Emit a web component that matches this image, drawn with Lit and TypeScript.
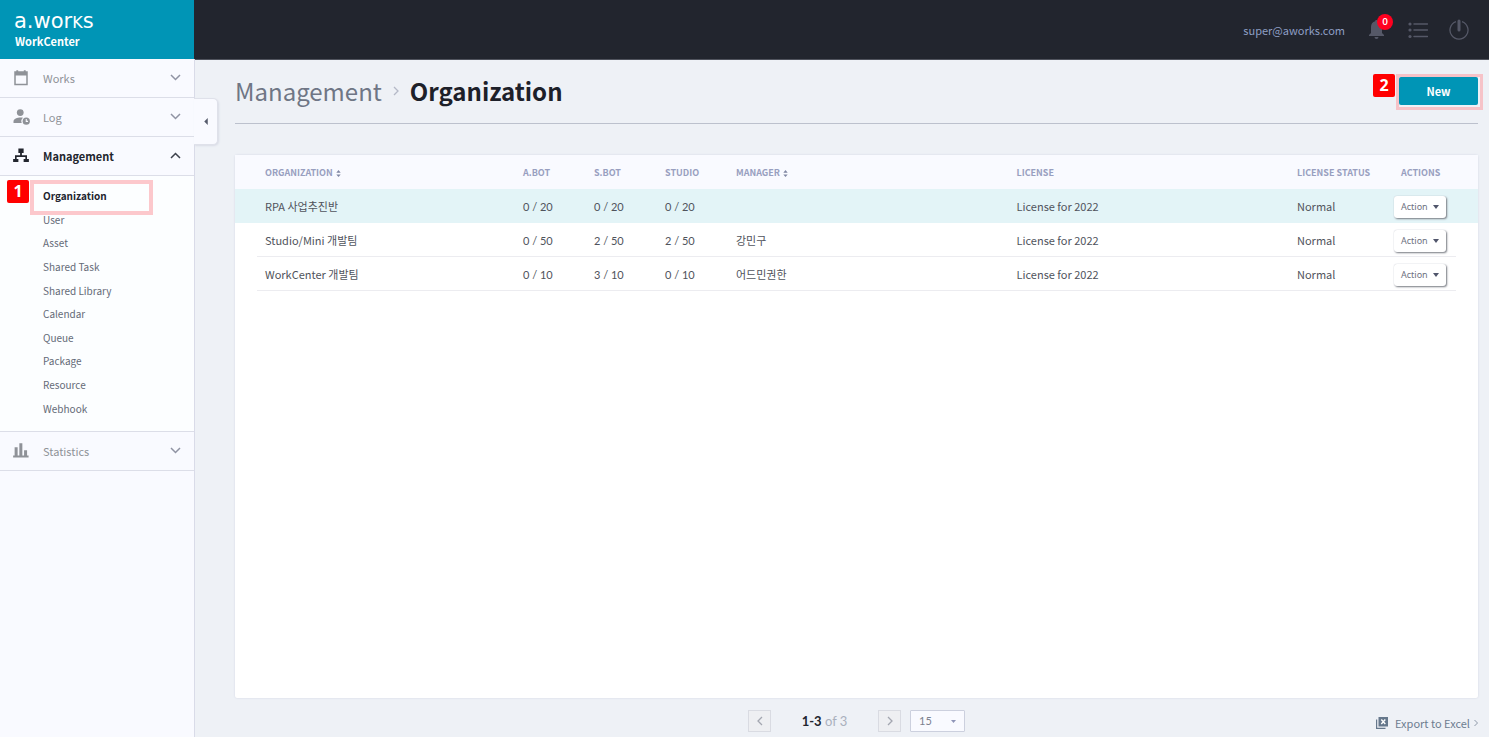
import { LitElement, html, css, svg, nothing } from "lit";
import { customElement } from "lit/decorators.js";
import { classMap } from "lit/directives/class-map.js";

const icons = {
  works: svg`<path d="M4 6h16v14.500H4zM4 4h16v3.500H4z" fill="none" stroke="currentColor" stroke-width="2"/><path d="M7 1.500v3M17 1.500v3" stroke="currentColor" stroke-width="2.500"/>`,
  log: svg`<circle cx="11" cy="6" r="4.500" fill="currentColor"/><path d="M2 20v-2.500c0-3 5-5 9.500-5 1.200 0 2.200.1 3.200.4A6 6 0 0 0 13 20z" fill="currentColor"/><circle cx="19" cy="17.500" r="4.800" fill="currentColor"/><path d="M19 14.800v3h2.400" fill="none" stroke="#f9faff" stroke-width="1.400"/>`,
  management: svg`<path d="M8.500 2h7v6h-2.300v3H20v5h2.500v4h-7v-4h2.300v-2.800H6.200V16h2.300v4h-7v-4H4v-5h6.800V8H8.500z" fill="currentColor"/>`,
  statistics: svg`<path d="M3.500 7h4v11h2.300V1.500h4V18h2.300v-7h4v7h2v2.500H1.500V18h2z" fill="currentColor"/>`,
};

interface Section {
  label: string;
  icon: keyof typeof icons;
  items?: string[];
}

const sections: Section[] = [
  { label: "Works", icon: "works" },
  { label: "Log", icon: "log" },
  {
    label: "Management",
    icon: "management",
    items: ["Organization", "User", "Asset", "Shared Task", "Shared Library", "Calendar", "Queue", "Package", "Resource", "Webhook"],
  },
  { label: "Statistics", icon: "statistics" },
];

const rows = [
  { name: "RPA 사업추진반", a: "0 / 20", s: "0 / 20", st: "0 / 20", manager: "" },
  { name: "Studio/Mini 개발팀", a: "0 / 50", s: "2 / 50", st: "2 / 50", manager: "강민구" },
  { name: "WorkCenter 개발팀", a: "0 / 10", s: "3 / 10", st: "0 / 10", manager: "어드민권한" },
];

const base = css`
  * { box-sizing: border-box; }
  button, select { font: inherit; color: inherit; margin: 0; cursor: pointer; }
  a { color: inherit; text-decoration: none; }
  svg { display: block; flex: none; }
  .badge {
    position: absolute;
    display: grid;
    place-items: center;
    width: 22px;
    height: 23px;
    border-radius: 2px;
    background: #f00;
    color: #fff;
    font: 700 16px/23px "Noto Sans", sans-serif;
  }
`;

@customElement("side-nav")
class SideNav extends LitElement {
  static styles = [base, css`
    :host {
      display: flex;
      flex-direction: column;
      position: relative;
      width: 195px;
      flex: none;
      background: #f9faff;
      border-right: 1px solid #d9dbe8;
    }
    .brand {
      height: 59px;
      margin-right: -1px;
      padding: 11px 14px 0;
      background: #0095b6;
      border-right: 1px solid #22252e;
      color: #fff;
    }
    .logo { font: 21px/20px "DejaVu Sans", sans-serif; }
    .cap { font-size: 16px; text-transform: uppercase; }
    .product { font-size: 11px; line-height: 16px; font-weight: 700; padding-left: 1px; }
    .head {
      display: flex;
      align-items: center;
      width: 100%;
      height: 39px;
      padding: 0 13px 0 12px;
      border: 0;
      border-bottom: 1px solid #dcdee8;
      background: none;
      color: #8f9298;
      font-size: 11px;
      text-align: left;
    }
    .head.open { color: #22252e; font-weight: 700; }
    .label { flex: 1; padding-left: 13px; }
    .chev { color: #9093a3; }
    .open .chev { color: #3d414c; }
    .items {
      list-style: none;
      margin: 0;
      padding: 8px 0 11px;
      display: grid;
      grid-auto-rows: 1fr;
      height: 256px;
      background: #fcfeff;
      border-bottom: 1px solid #dcdee8;
      font-size: 10px;
      color: #646a77;
    }
    .item { position: relative; display: flex; align-items: center; padding-left: 43px; }
    .current { color: #22252e; font-weight: 700; }
    .frame {
      position: absolute;
      left: 30px;
      top: -4px;
      width: 123px;
      height: 35px;
      border: 4px solid #fcc8cc;
      pointer-events: none;
    }
    .badge { left: 7px; top: -4px; }
    .handle {
      position: absolute;
      left: 194px;
      top: 98px;
      width: 24px;
      height: 47px;
      display: grid;
      place-items: center;
      padding: 0;
      border: 1px solid #dfe1ea;
      border-left: 0;
      border-radius: 0 5px 5px 0;
      background: #f9faff;
      box-shadow: 1px 1px 2px #d9dce6;
      color: #555b6b;
    }
  `];

  render() {
    return html`
      <div class="brand">
        <div class="logo">a.wor<span class="cap">k</span>s</div>
        <div class="product">WorkCenter</div>
      </div>
      <nav>
        ${sections.map((s) => html`
          <button class=${classMap({ head: true, open: !!s.items })} aria-expanded=${!!s.items}>
            <svg width="18" height="18" viewBox="0 0 24 24">${icons[s.icon]}</svg>
            <span class="label">${s.label}</span>
            <svg class="chev" width="11" height="8" viewBox="0 0 11 8">
              <path d=${s.items ? "M1 6 5.500 1.500 10 6" : "M1 1 5.500 5.500 10 1"} fill="none" stroke="currentColor" stroke-width="1.500"/>
            </svg>
          </button>
          ${s.items ? html`<ul class="items">
            ${s.items.map((item, i) => html`
              <li class=${classMap({ item: true, current: i === 0 })}>
                <a href="#">${item}</a>
                ${i === 0 ? html`<span class="frame"></span><span class="badge">1</span>` : nothing}
              </li>`)}
          </ul>` : nothing}
        `)}
      </nav>
      <button class="handle" aria-label="Collapse menu">
        <svg width="4" height="7" viewBox="0 0 4 8"><path d="M4 0v8L0 4z" fill="currentColor"/></svg>
      </button>
    `;
  }
}

@customElement("top-bar")
class TopBar extends LitElement {
  static styles = [base, css`
    :host {
      display: flex;
      align-items: center;
      justify-content: flex-end;
      height: 60px;
      flex: none;
      padding-right: 20px;
      background: #22252e;
      border-bottom: 1px solid #50535d;
      color: #8e9fc4;
      font-size: 11px;
    }
    button {
      position: relative;
      padding: 0;
      border: 0;
      background: none;
      color: #555867;
    }
    .bell { margin-left: 23px; }
    .list { margin-left: 23px; }
    .power { margin-left: 21px; }
    .count {
      position: absolute;
      left: 9px;
      top: -6px;
      width: 16px;
      height: 16px;
      border-radius: 50%;
      background: #ff001f;
      color: #fff;
      font: 700 9px/16px Lato, sans-serif;
      text-align: center;
    }
  `];

  render() {
    return html`
      <span>super@aworks.com</span>
      <button class="bell" aria-label="Notifications">
        <svg width="17" height="20" viewBox="0 0 17 20">
          <path d="M8.500 0c.8 0 1.300.5 1.300 1.300C12.600 2 14 4.300 14 7v6l2 2v1H1v-1l2-2V7c0-2.700 1.400-5 4.200-5.700C7.200.5 7.700 0 8.500 0zM6.500 17h4a2 2 0 0 1-4 0z" fill="currentColor"/>
        </svg>
        <span class="count">0</span>
      </button>
      <button class="list" aria-label="List">
        <svg width="20" height="18" viewBox="0 0 20 18">
          <g fill="currentColor"><circle cx="2" cy="3" r="1.600"/><circle cx="2" cy="9" r="1.600"/><circle cx="2" cy="15.500" r="1.600"/></g>
          <path d="M6 3h13.500M6 9h13.500M6 15.500h13.500" stroke="currentColor" stroke-width="1.500" stroke-linecap="round"/>
        </svg>
      </button>
      <button class="power" aria-label="Log out">
        <svg width="20" height="22" viewBox="0 0 20 22">
          <path d="M7 2.600a9 9 0 1 0 6 0" fill="none" stroke="currentColor" stroke-width="1.300"/>
          <path d="M10 2v9" stroke="currentColor" stroke-width="3" stroke-linecap="round"/>
        </svg>
      </button>
    `;
  }
}

@customElement("organization-table")
class OrganizationTable extends LitElement {
  static styles = [base, css`
    :host {
      display: block;
      flex: 1;
      background: #fff;
      border-radius: 2px;
      box-shadow: 0 0 2px #cdd2df;
    }
    table { width: 100%; table-layout: fixed; border-collapse: collapse; font-size: 11px; color: #50535c; }
    .org { width: 288px; }
    .bot { width: 71px; }
    .status { width: 97px; }
    .actions { width: 84px; }
    th {
      height: 34px;
      padding: 0;
      background: #f9faff;
      color: #989fc0;
      font-size: 9px;
      font-weight: 700;
      text-align: left;
      white-space: nowrap;
    }
    th.org, td.name { padding-left: 30px; }
    th.actions { padding-left: 7px; }
    td { height: 34px; padding: 0; white-space: nowrap; }
    td.act { padding-top: 2px; }
    .num { font-family: Lato, sans-serif; }
    .row { background: linear-gradient(#ececf0, #ececf0) 22px bottom / calc(100% - 44px) 1px no-repeat; }
    .row.selected { background: #e3f4f7; }
    .sort { display: inline-block; margin-left: 1px; vertical-align: -1px; }
    .action {
      display: flex;
      align-items: center;
      gap: 5px;
      height: 22px;
      padding: 0 7px;
      border: 0;
      border-radius: 3px;
      background: #fff;
      box-shadow: 1px 1px 2px #777a82, 0 0 1px #c4c7cf;
      color: #6d7180;
      font: 9px/22px "Noto Sans", sans-serif;
    }
  `];

  private sort = html`<svg class="sort" width="5" height="7" viewBox="0 0 5 8"><path d="M0 3h5L2.500 0zM0 5h5L2.500 8z" fill="#8087a3"/></svg>`;

  render() {
    return html`
      <table>
        <thead><tr>
          <th class="org">ORGANIZATION ${this.sort}</th>
          <th class="bot">A.BOT</th>
          <th class="bot">S.BOT</th>
          <th class="bot">STUDIO</th>
          <th>MANAGER ${this.sort}</th>
          <th>LICENSE</th>
          <th class="status">LICENSE STATUS</th>
          <th class="actions">ACTIONS</th>
        </tr></thead>
        <tbody>
          ${rows.map((r, i) => html`<tr class=${classMap({ row: true, selected: i === 0 })}>
            <td class="name">${r.name}</td>
            <td class="num">${r.a}</td>
            <td class="num">${r.s}</td>
            <td class="num">${r.st}</td>
            <td>${r.manager}</td>
            <td>License for 2022</td>
            <td>Normal</td>
            <td class="act"><button class="action">Action
              <svg width="6" height="4" viewBox="0 0 6 4"><path d="M0 0h6L3 4z" fill="#50556b"/></svg>
            </button></td>
          </tr>`)}
        </tbody>
      </table>
    `;
  }
}

@customElement("app-root")
class AppRoot extends LitElement {
  static styles = [base, css`
    :host {
      display: flex;
      min-height: 100vh;
      background: #eef1f6;
      font-family: "Noto Sans CJK KR", sans-serif;
    }
    .page { flex: 1; min-width: 0; display: flex; flex-direction: column; }
    main { flex: 1; display: flex; flex-direction: column; padding: 0 11px 0 40px; }
    .title {
      display: flex;
      align-items: center;
      justify-content: space-between;
      height: 64px;
      padding-bottom: 1px;
      border-bottom: 1px solid #bcc1cd;
      margin-bottom: 31px;
    }
    h1 {
      display: flex;
      align-items: center;
      gap: 11px;
      margin: 0;
      font-size: 24px;
      line-height: 36px;
      color: #1d2029;
    }
    .parent { font-weight: 400; color: #6f7685; }
    .new { position: relative; }
    .create {
      display: block;
      width: 79px;
      height: 28px;
      padding: 0;
      border: 0;
      border-radius: 2px;
      background: #0095b6;
      color: #fff;
      font-size: 11px;
      font-weight: 700;
    }
    .frame {
      position: absolute;
      inset: -3px -5px -5px -3px;
      border: 3px solid #f6c3c8;
      pointer-events: none;
    }
    .badge { right: 83px; top: -3px; }
    footer {
      display: grid;
      grid-template-columns: 1fr auto 1fr;
      align-items: center;
      height: 39px;
      padding-top: 6px;
      font-size: 11px;
    }
    .pager { grid-column: 2; display: flex; align-items: center; height: 22px; }
    .step {
      display: grid;
      place-items: center;
      width: 23px;
      height: 22px;
      padding: 0;
      border: 1px solid #d9dbe2;
      background: #eeeff2;
      color: #a3a6b0;
    }
    .range { width: 107px; text-align: center; color: #aab0bd; font-family: Lato, sans-serif; font-size: 13px; }
    .range b { color: #22252e; }
    .size { position: relative; margin-left: 9px; color: #8f95b8; }
    select {
      appearance: none;
      display: block;
      width: 55px;
      height: 22px;
      padding: 0 8px;
      border: 1px solid #ccd0de;
      border-radius: 1px;
      background: #f9faff;
      color: #7c818f;
      font: 11px/20px Lato, sans-serif;
    }
    .caret { position: absolute; right: 9px; top: 10px; pointer-events: none; }
    .export {
      display: flex;
      align-items: center;
      justify-self: end;
      margin-top: 4px;
      color: #6d7d90;
      line-height: 20px;
    }
    .export-text { margin: 0 4px 0 7px; }
  `];

  render() {
    return html`
      <side-nav></side-nav>
      <div class="page">
        <top-bar></top-bar>
        <main>
          <div class="title">
            <h1>
              <span class="parent">Management</span>
              <svg width="6" height="10" viewBox="0 0 6 10"><path d="M1 1l4 4-4 4" fill="none" stroke="#b5b9c7" stroke-width="1.300"/></svg>
              <span>Organization</span>
            </h1>
            <div class="new">
              <button class="create">New</button>
              <span class="frame"></span>
              <span class="badge">2</span>
            </div>
          </div>
          <organization-table></organization-table>
          <footer>
            <div class="pager">
              <button class="step" aria-label="Previous page">
                <svg width="6" height="10" viewBox="0 0 6 10"><path d="M5 1L1 5l4 4" fill="none" stroke="currentColor" stroke-width="1.300"/></svg>
              </button>
              <span class="range"><b>1-3</b> of 3</span>
              <button class="step" aria-label="Next page">
                <svg width="6" height="10" viewBox="0 0 6 10"><path d="M1 1l4 4-4 4" fill="none" stroke="currentColor" stroke-width="1.300"/></svg>
              </button>
              <div class="size">
                <select aria-label="Rows per page"><option>15</option></select>
                <svg class="caret" width="5" height="3" viewBox="0 0 5 3"><path d="M0 0h5L2.500 3z" fill="currentColor"/></svg>
              </div>
            </div>
            <a class="export" href="#">
              <svg width="12" height="12" viewBox="0 0 12 12">
                <path d="M2.500 0h9.500v9.500H2.500zM0 2.500h1.200v8.300h8.300V12H0z" fill="#66788c"/>
                <path d="M5.300 2.500l4 4.500M9.300 2.500l-4 4.500" stroke="#fff" stroke-width="1.400"/>
              </svg>
              <span class="export-text">Export to Excel</span>
              <svg width="4" height="8" viewBox="0 0 4 8"><path d="M.5 1l3 3-3 3" fill="none" stroke="#8d98a8"/></svg>
            </a>
          </footer>
        </main>
      </div>
    `;
  }
}
